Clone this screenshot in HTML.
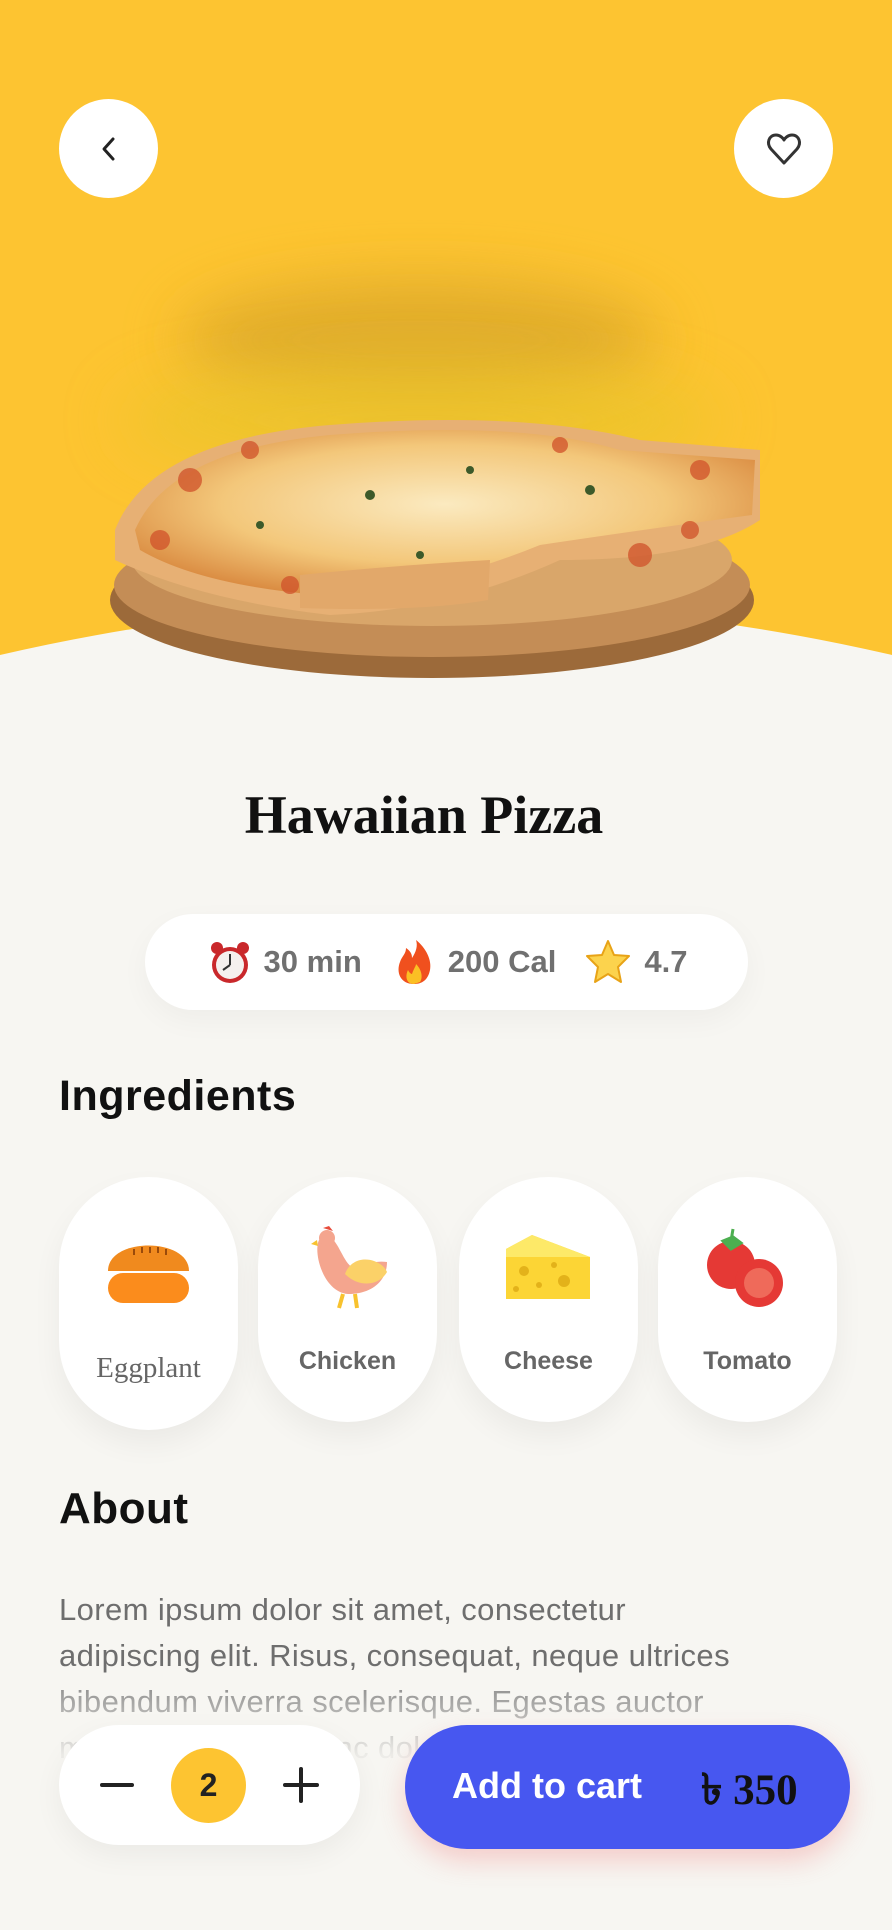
<!DOCTYPE html>
<html><head><meta charset="utf-8"><style>
*{margin:0;padding:0;box-sizing:border-box}
body{width:892px;height:1930px;background:#f7f6f2;position:relative;overflow:hidden;font-family:"Liberation Sans",sans-serif}
.abs{position:absolute}
.circ{background:#fff;border-radius:50%;width:99px;height:99px;display:flex;align-items:center;justify-content:center}
.card{position:absolute;top:1177px;width:179px;height:245px;background:#fff;border-radius:90px;box-shadow:0 14px 30px rgba(0,0,0,0.05);text-align:center}
.card .lbl{position:absolute;top:170px;left:0;right:0;font-size:25px;color:#666;font-weight:bold}
.card svg{position:absolute;left:45px;top:50px}
</style></head><body>
<svg class="abs" style="left:0;top:0" width="892" height="700">
<defs>
<filter id="b" x="-50%" y="-50%" width="200%" height="200%"><feGaussianBlur stdDeviation="30"/></filter>
<radialGradient id="ch" cx="50%" cy="45%" r="60%"><stop offset="0" stop-color="#fbeac0"/><stop offset="0.6" stop-color="#f3c77a"/><stop offset="1" stop-color="#d9893f"/></radialGradient>
</defs>
<rect width="892" height="700" fill="#fdc431"/>
<ellipse cx="420" cy="340" rx="240" ry="60" fill="#d9a62a" filter="url(#b)" opacity="0.8"/>
<ellipse cx="420" cy="420" rx="300" ry="60" fill="#e6c52a" filter="url(#b)" opacity="0.6"/>
<path d="M0,655 Q446,552 892,655 L892,700 L0,700Z" fill="#f7f6f2"/>
<ellipse cx="432" cy="600" rx="322" ry="78" fill="#9c6a3a"/>
<ellipse cx="432" cy="585" rx="318" ry="72" fill="#c48d56"/>
<ellipse cx="432" cy="560" rx="300" ry="66" fill="#d9a66a"/>
<path d="M115,530 Q150,440 330,425 Q520,410 640,440 L760,450 L760,520 Q700,560 560,560 Q450,610 330,615 Q200,600 115,560Z" fill="#e7b074"/>
<path d="M135,530 Q170,450 330,435 Q520,420 620,450 L755,460 L752,515 Q640,530 540,545 Q430,590 320,595 Q200,585 140,550Z" fill="url(#ch)"/>
<g fill="#d0522a" opacity="0.75">
<circle cx="190" cy="480" r="12"/><circle cx="250" cy="450" r="9"/><circle cx="160" cy="540" r="10"/><circle cx="640" cy="555" r="12"/><circle cx="700" cy="470" r="10"/><circle cx="290" cy="585" r="9"/><circle cx="380" cy="585" r="8"/><circle cx="560" cy="445" r="8"/><circle cx="690" cy="530" r="9"/>
</g>
<g fill="#3d5a2a"><circle cx="370" cy="495" r="5"/><circle cx="260" cy="525" r="4"/><circle cx="590" cy="490" r="5"/><circle cx="470" cy="470" r="4"/><circle cx="420" cy="555" r="4"/></g>
<path d="M300,608 Q420,612 488,600 L490,560 Q400,565 300,575Z" fill="#e2a86a"/>
</svg>
<div class="circ abs" style="left:59px;top:99px"><svg width="30" height="30" viewBox="0 0 30 30"><path d="M19,5 L10,15 L19,25" fill="none" stroke="#222" stroke-width="3" stroke-linecap="round" stroke-linejoin="round"/></svg></div>
<div class="circ abs" style="left:734px;top:99px"><svg width="40" height="40" viewBox="0 0 40 40"><path d="M20,34 L7,20 C2,14 5,6 12,6 C16,6 19,9 20,11 C21,9 24,6 28,6 C35,6 38,14 33,20Z" fill="none" stroke="#333" stroke-width="3" stroke-linejoin="round"/></svg></div>
<div class="abs" style="left:0;width:848px;top:784px;text-align:center;font-family:'Liberation Serif',serif;font-weight:bold;font-size:54px;color:#111">Hawaiian Pizza</div>
<div class="abs" style="left:145px;top:914px;width:603px;height:96px;background:#fff;border-radius:48px;box-shadow:0 10px 30px rgba(0,0,0,0.04);display:flex;align-items:center;justify-content:center;gap:0;font-size:31px;font-weight:bold;color:#707070">
<svg width="48" height="48" viewBox="0 0 48 48"><circle cx="24" cy="27" r="18" fill="#c9282b"/><circle cx="24" cy="27" r="14" fill="#f5f0ee"/><circle cx="11" cy="10" r="6" fill="#c9282b"/><circle cx="37" cy="10" r="6" fill="#c9282b"/><path d="M24,27 L24,16 M24,27 L17,32" stroke="#333" stroke-width="2"/></svg>
<span style="margin:0 30px 0 10px">30 min</span>
<svg width="44" height="48" viewBox="0 0 44 48"><path d="M22,46 C8,46 4,34 8,24 C10,18 14,16 14,10 C20,14 20,18 20,20 C24,14 26,8 24,2 C34,10 40,22 38,32 C36,42 30,46 22,46Z" fill="#f0501e"/><path d="M22,46 C14,46 13,38 16,32 C18,36 20,36 20,36 C22,30 24,28 24,26 C30,32 31,40 28,44Z" fill="#fbbf24"/></svg>
<span style="margin:0 28px 0 12px">200 Cal</span>
<svg width="48" height="48" viewBox="0 0 48 48"><path d="M24,3 L30,17 L45,18 L34,29 L37,44 L24,36 L11,44 L14,29 L3,18 L18,17Z" fill="#fcd34d" stroke="#e8a317" stroke-width="2" stroke-linejoin="round"/></svg>
<span style="margin-left:12px">4.7</span>
</div>
<div class="abs" style="left:59px;top:1072px;font-size:43px;font-weight:bold;color:#111;letter-spacing:0.5px">Ingredients</div>
<div class="card" style="left:59px;height:253px"><svg width="89" height="80" viewBox="0 0 89 80"><path d="M4,44 C4,10 85,10 85,44Z" fill="#f08a1e"/><rect x="4" y="46" width="81" height="30" rx="15" fill="#fb8c1c"/><g stroke="#9a4a0a" stroke-width="2"><path d="M30,22v6M38,20v6M46,20v6M54,20v6M62,22v6"/></g></svg><div class="lbl" style="font-family:'Liberation Serif',serif;font-weight:normal;top:175px;font-size:29px">Eggplant</div></div>
<div class="card" style="left:258px"><svg width="89" height="92" viewBox="0 0 89 92" style="top:45px"><path d="M16,18 C10,30 20,70 45,72 C70,72 84,58 84,40 C70,38 60,44 50,46 C40,40 36,20 26,14Z" fill="#f4a58e"/><path d="M42,52 C50,30 78,36 84,50 C76,64 56,66 42,52Z" fill="#fbd168"/><circle cx="24" cy="16" r="8" fill="#f4a58e"/><path d="M20,6 L26,4 L30,9" fill="#e74c3c"/><path d="M14,18 L8,22 L15,24Z" fill="#f8c22e"/><path d="M40,72 L36,86 M52,72 L54,86" stroke="#f8c22e" stroke-width="4"/></svg><div class="lbl">Chicken</div></div>
<div class="card" style="left:459px"><svg width="89" height="84" viewBox="0 0 89 84"><path d="M2,22 L28,8 L86,30 L86,72 L2,72Z" fill="#fcd535"/><path d="M2,22 L28,8 L86,30 L2,30Z" fill="#fde968"/><g fill="#e3b21a"><circle cx="20" cy="44" r="5"/><circle cx="60" cy="54" r="6"/><circle cx="50" cy="38" r="3"/><circle cx="12" cy="62" r="3"/><circle cx="35" cy="58" r="3"/></g></svg><div class="lbl">Cheese</div></div>
<div class="card" style="left:658px"><svg width="89" height="84" viewBox="0 0 89 84"><circle cx="28" cy="38" r="24" fill="#e53935"/><circle cx="56" cy="56" r="24" fill="#e53935"/><circle cx="56" cy="56" r="15" fill="#ef6a5a"/><path d="M20,14 L30,10 L38,16 L28,22Z M28,14 L30,2" fill="#4caf50" stroke="#4caf50" stroke-width="3"/></svg><div class="lbl">Tomato</div></div>
<div class="abs" style="left:59px;top:1484px;font-size:44px;font-weight:bold;color:#111;letter-spacing:0.5px">About</div>
<div class="abs" style="left:59px;top:1587px;width:800px;white-space:nowrap;font-size:31px;line-height:46px;color:#6e6e6e;letter-spacing:0.4px">Lorem ipsum dolor sit amet, consectetur<br>adipiscing elit. Risus, consequat, neque ultrices<br>bibendum viverra scelerisque. Egestas auctor<br>mattis nunc odio nunc dolor justo nulla.</div>
<div class="abs" style="left:0;top:1680px;width:892px;height:250px;background:linear-gradient(to bottom,rgba(247,246,242,0.2),rgba(247,246,242,0.92) 30%,#f7f6f2 45%)"></div>
<div class="abs" style="left:59px;top:1725px;width:301px;height:120px;background:#fff;border-radius:60px;box-shadow:0 10px 30px rgba(0,0,0,0.05)">
<div class="abs" style="left:41px;top:58px;width:34px;height:4px;background:#222;border-radius:2px"></div>
<div class="abs" style="left:112px;top:23px;width:75px;height:75px;border-radius:50%;background:#fdc431;text-align:center;line-height:75px;font-size:32px;font-weight:bold;color:#222">2</div>
<div class="abs" style="left:224px;top:58px;width:36px;height:4px;background:#222;border-radius:2px"></div>
<div class="abs" style="left:240px;top:42px;width:4px;height:36px;background:#222;border-radius:2px"></div>
</div>
<div class="abs" style="left:405px;top:1725px;width:445px;height:124px;background:#4757f0;border-radius:62px;box-shadow:0 12px 26px rgba(240,110,110,0.3);color:#fff">
<div class="abs" style="left:47px;top:40px;font-size:36px;font-weight:bold">Add to cart</div>
<div class="abs" style="left:296px;top:33px;font-size:43px;font-weight:bold;font-family:'Liberation Serif',serif;color:#111">৳ 350</div>
</div>
</body></html>
